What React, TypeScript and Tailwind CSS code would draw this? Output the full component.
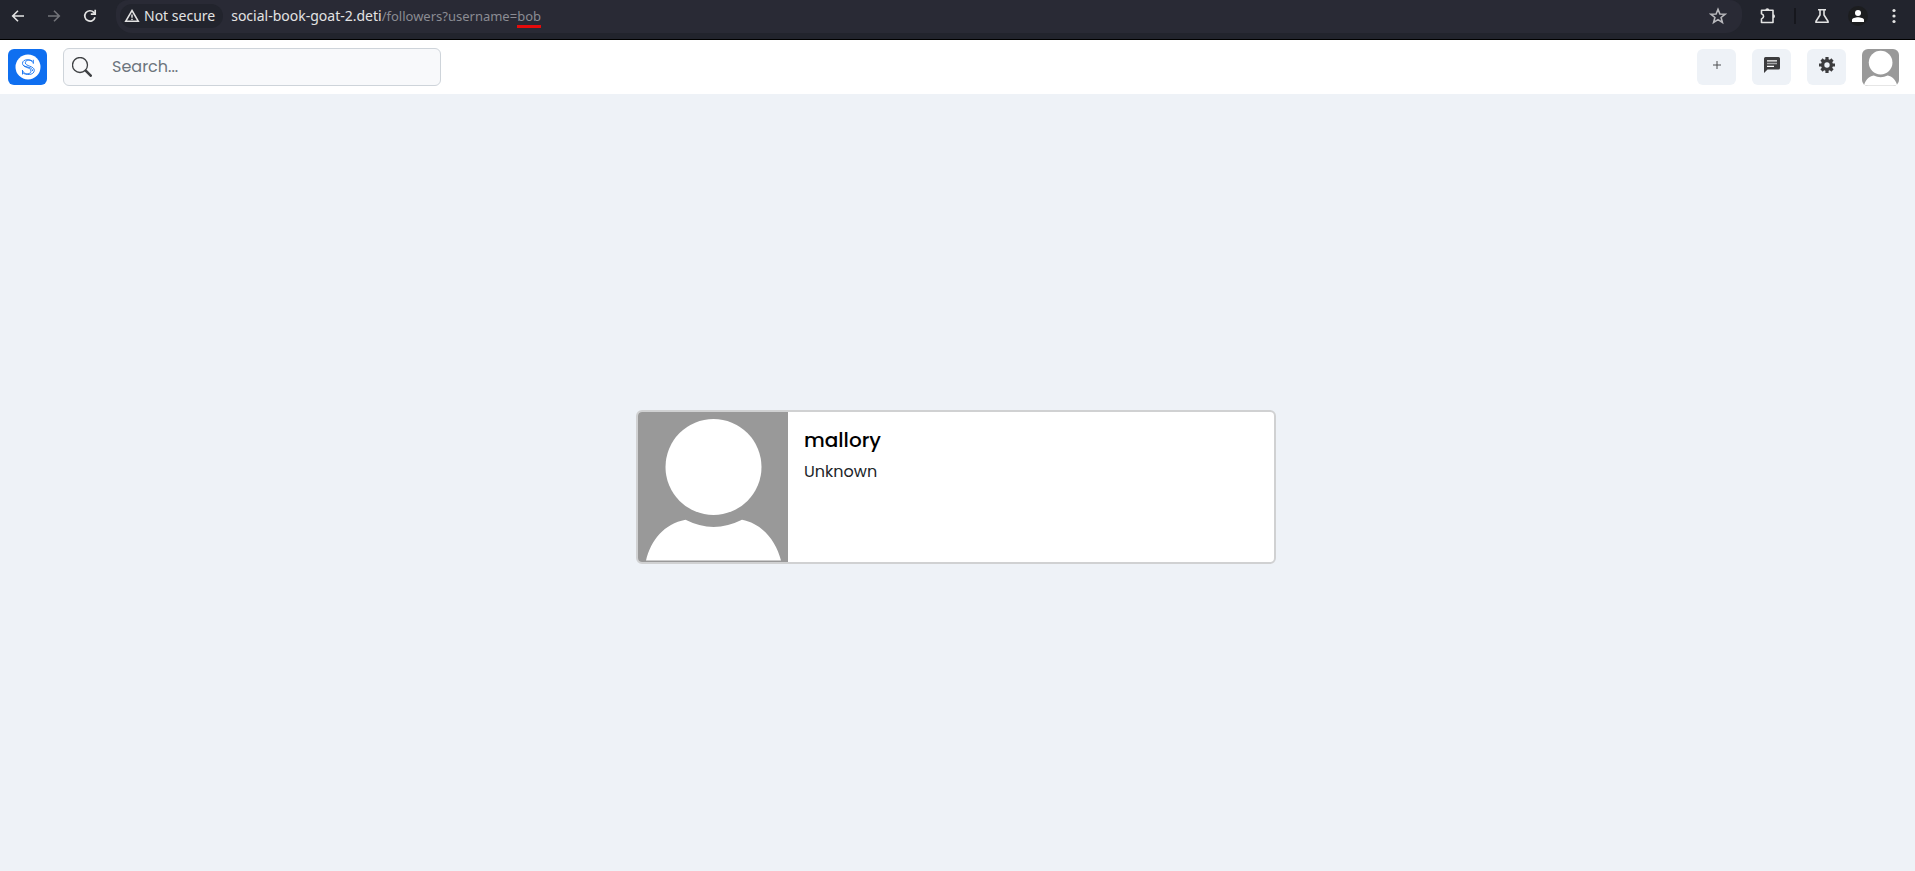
import type { ReactNode } from "react";

function Avatar({ className }: { className: string }) {
  return (
    <svg viewBox="0 0 150 150" className={className} role="img" aria-label="Profile picture">
      <rect width="150" height="150" fill="#999999" />
      <circle cx="75.5" cy="55" r="48" fill="#ffffff" />
      <path d="M8 148.500C13 128 26 112 47.500 107.800Q75.500 122 104 107.800C125 112 138 129 143 148.500Z" fill="#ffffff" />
    </svg>
  );
}

function BrowserButton({ label, className, children }: { label: string; className: string; children: ReactNode }) {
  return (
    <button type="button" aria-label={label} className={`flex shrink-0 items-center justify-center ${className}`}>
      {children}
    </button>
  );
}

function BrowserBar() {
  return (
    <div className="flex h-10 shrink-0 items-start border-b border-black bg-[#22242d] text-[#e3e3e3]">
      <nav aria-label="Browser" className="flex h-8 items-center pl-2">
        <BrowserButton label="Back" className="size-5">
          <svg viewBox="0 0 16 16" className="size-4" fill="none" stroke="currentColor" strokeWidth="1.6">
            <path d="M14 8H3M8 2.700L2.700 8L8 13.300" />
          </svg>
        </BrowserButton>
        <BrowserButton label="Forward" className="ml-4 size-5 text-[#73747a]">
          <svg viewBox="0 0 16 16" className="size-4" fill="none" stroke="currentColor" strokeWidth="1.6">
            <path d="M2 8h11M8 2.700L13.300 8L8 13.300" />
          </svg>
        </BrowserButton>
        <BrowserButton label="Reload" className="ml-4 size-5">
          <svg viewBox="0 0 16 16" className="size-4" fill="none" stroke="currentColor" strokeWidth="1.7">
            <path d="M13 9.300A5.200 5.200 0 1 1 11.800 4.400L13.200 6" />
            <path d="M13.200 1.800V6.200H8.800" />
          </svg>
        </BrowserButton>
      </nav>
      <div className="ml-4 flex h-[33px] min-w-0 flex-1 items-center rounded-b-2xl rounded-t-xl bg-[#292a35] pb-px pl-1 font-['Noto_Sans',sans-serif] text-sm">
        <button type="button" className="flex h-6 shrink-0 items-center gap-1 rounded-full bg-[#22242d] pl-1 pr-2">
          <svg viewBox="0 0 16 16" className="size-4" fill="none" stroke="currentColor" strokeWidth="1.5">
            <path d="M8 2.500L14.300 13.300H1.700Z" />
            <path d="M8 6.500v3.200M8 10.700v1.300" />
          </svg>
          Not secure
        </button>
        <div className="ml-2 min-w-0 flex-1 whitespace-nowrap">
          <span>social-book-goat-2.deti</span>
          <span className="text-[13px] text-[#8b8c93]">
            /followers?username=<span className="border-b-3 border-[#e60b0b]">bob</span>
          </span>
        </div>
        <BrowserButton label="Bookmark" className="mr-[14px] size-5 text-[#b9b9bd]">
          <svg viewBox="0 0 18 18" className="size-[18px]" fill="none" stroke="currentColor" strokeWidth="1.6">
            <path d="M9 2.300L10.900 7L16 7.300L12.100 10.500L13.400 15.500L9 12.700L4.600 15.500L5.900 10.500L2 7.300L7.100 7Z" />
          </svg>
        </BrowserButton>
      </div>
      <div className="flex h-8 shrink-0 items-center pl-4 pr-[11px]">
        <BrowserButton label="Extensions" className="size-5">
          <svg viewBox="0 0 18 18" className="size-[18px]" fill="none" stroke="currentColor" strokeWidth="1.600">
            <path d="M2.500 3.200H14V15.500H2.500V11.900C5.300 11 5.300 7.700 2.500 6.800Z" strokeLinejoin="round" />
            <path d="M6.300 3.200A2 2 0 0 1 10.300 3.200ZM14 7.200A2 2 0 0 1 14 11.200Z" fill="currentColor" stroke="none" />
          </svg>
        </BrowserButton>
        <span className="ml-4 h-4 w-0.5 bg-[#16171d]" />
        <BrowserButton label="Labs" className="ml-4 size-5">
          <svg viewBox="0 0 16 16" className="size-4" fill="none" stroke="currentColor" strokeWidth="1.6">
            <path d="M4 1.800H12M6 2V7L2 13.200V14.200H14V13.200L10 7V2" />
          </svg>
        </BrowserButton>
        <BrowserButton label="Profile" className="ml-4 size-5 rounded-full bg-[#1c1d1f] text-white">
          <svg viewBox="0 0 12 12" className="size-3" fill="currentColor">
            <circle cx="6" cy="3" r="3" />
            <path d="M0 12V10C0 8.200 3.500 7.300 6 7.300S12 8.200 12 10V12Z" />
          </svg>
        </BrowserButton>
        <BrowserButton label="Menu" className="ml-4 size-5">
          <svg viewBox="0 0 16 16" className="size-4" fill="currentColor">
            <circle cx="8" cy="2.500" r="1.600" />
            <circle cx="8" cy="8" r="1.600" />
            <circle cx="8" cy="13.500" r="1.600" />
          </svg>
        </BrowserButton>
      </div>
    </div>
  );
}

function Header() {
  return (
    <header className="flex h-[54px] shrink-0 items-center justify-between bg-white pl-2 pr-4">
      <div className="flex items-center gap-4">
        <a href="#home" aria-label="Home" className="flex h-9 w-[39px] items-center justify-center rounded-md bg-[#0f6ff0]">
          <svg viewBox="0 0 26 26" className="size-[26px]" fill="none">
            <circle cx="13" cy="13" r="12.500" fill="#ffffff" />
            <g stroke="#0f6ff0" strokeWidth="0.900">
              <path d="M18.300 9.800V5.800M18.300 8.800C16 4.500 7.500 4.800 7.500 9.300C7.500 14 16 13 16 17C16 20.500 9.500 21 7.500 16.800" />
              <path d="M17.300 7C14 5 10.300 6.500 10.300 8.800C10.300 12.300 19.300 11.800 19.300 16.300C19.300 21.500 10 21.500 7.500 18.500M7.500 16V20.500" />
              <path d="M8.500 11.500C11 13.500 17.600 12.800 17.600 17" />
            </g>
          </svg>
        </a>
        <form role="search" className="flex h-[38px] w-[378px] items-center rounded-md border border-[#ced4da] bg-[#f8f9fb] pl-2">
          <label htmlFor="search" aria-label="Search" className="shrink-0 text-[#3f4144]">
            <svg viewBox="0 0 20 20" className="size-5" fill="none" stroke="currentColor">
              <circle cx="8" cy="8" r="7.500" strokeWidth="1.300" />
              <path d="M13.700 13.700L18.700 18.700" strokeWidth="2.600" strokeLinecap="round" />
            </svg>
          </label>
          <input
            id="search"
            type="text"
            placeholder="Search..."
            className="ml-5 min-w-0 flex-1 bg-transparent text-base text-[#212529] outline-none placeholder:text-[#6c757d]"
          />
        </form>
      </div>
      <div className="flex items-center gap-4">
        <HeaderButton label="Create post">
          <svg viewBox="0 0 8 8" className="size-2" fill="none" stroke="#4c4e51" strokeWidth="1">
            <path d="M4 0V8M0 4H8" />
          </svg>
        </HeaderButton>
        <HeaderButton label="Messages">
          <svg viewBox="0 0 16 16" className="size-4">
            <path d="M1.500 0H14.500Q16 0 16 1.500V11Q16 12.500 14.500 12.500H3.500L0 16V1.500Q0 0 1.500 0Z" fill="currentColor" />
            <path d="M3 3.800H13M3 9.300H10" stroke="#ffffff" strokeWidth="1.200" />
            <path d="M3 6.500H13" stroke="#a6a7a9" strokeWidth="1.500" />
          </svg>
        </HeaderButton>
        <HeaderButton label="Settings">
          <svg viewBox="0 0 16 16" className="size-4">
            <g stroke="currentColor" strokeWidth="3.200">
              <path d="M8 0V16M0 8H16M2.500 2.500L13.500 13.500M13.500 2.500L2.500 13.500" />
            </g>
            <circle cx="8" cy="8" r="6" fill="currentColor" />
            <circle cx="8" cy="8" r="2.700" fill="#eef2f7" />
          </svg>
        </HeaderButton>
        <a href="#profile" aria-label="Your profile">
          <Avatar className="size-[37px] rounded-md" />
        </a>
      </div>
    </header>
  );
}

function HeaderButton({ label, children }: { label: string; children: ReactNode }) {
  return (
    <button
      type="button"
      aria-label={label}
      className="flex h-9 w-[39px] items-center justify-center rounded-md bg-[#eef2f7] pb-1 text-[#3c3c3e]"
    >
      {children}
    </button>
  );
}

function FollowerCard({ name, location }: { name: string; location: string }) {
  return (
    <article className="flex w-1/3 min-w-[640px] overflow-hidden rounded-md border-2 border-[#d0d1d2] bg-white">
      <Avatar className="size-[150px] shrink-0" />
      <div className="p-4">
        <h2 className="text-xl leading-6 font-medium text-black">
          <a href="#mallory">{name}</a>
        </h2>
        <p className="mt-2 text-base leading-6 text-[#212529]">{location}</p>
      </div>
    </article>
  );
}

export default function App() {
  return (
    <div className="flex min-h-screen flex-col bg-[#eef2f7] font-['Poppins','Inter',sans-serif]">
      <BrowserBar />
      <Header />
      <main className="flex flex-1 items-center justify-center pt-[9px] pr-[3px]">
        <FollowerCard name="mallory" location="Unknown" />
      </main>
    </div>
  );
}
